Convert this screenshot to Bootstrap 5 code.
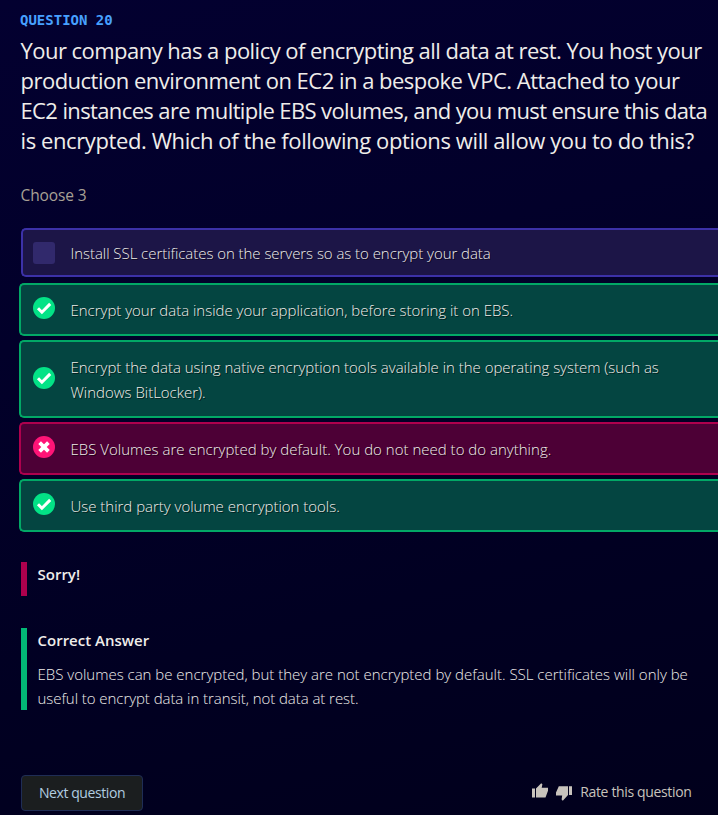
<!DOCTYPE html>
<html lang="en">
<head>
<meta charset="utf-8">
<meta name="viewport" content="width=device-width, initial-scale=1">
<title>Question 20</title>
<link href="https://cdn.jsdelivr.net/npm/bootstrap@5.3.0/dist/css/bootstrap.min.css" rel="stylesheet">
<style>
body{background:linear-gradient(165deg,#030030 0%,#02002a 35%,#010022 70%,#01001c 100%);min-height:815px;color:#efedea;font-family:"Open Sans","Noto Sans",sans-serif;overflow:hidden}
.quiz{padding:11px 0 0 21px}
.q-label{font:bold 14px/18px "DejaVu Sans Mono",monospace;color:#47a0ff;margin:0 0 6px -1px}
.q-title{font-size:22px;line-height:30px;font-weight:400;letter-spacing:-.51px;margin-left:-.5px}
.l1{letter-spacing:-.535px}.l3{letter-spacing:-.625px}.l4{letter-spacing:-.4px}
.line{white-space:nowrap;display:block;width:max-content}
.hint{font-size:15.5px;line-height:24px;color:#a8a095;margin:28px 0 21px -.5px;letter-spacing:-.1px}
.option{border:2px solid;border-radius:5px;font-size:15px;line-height:25px;font-weight:340;padding-left:10px;border-right:0;border-top-right-radius:0;border-bottom-right-radius:0;text-shadow:1px 1px 0 rgba(0,0,0,.6)}
.option .line{letter-spacing:-.02px;position:relative;top:.5px}
.option .o1{letter-spacing:-.05px}.option .o5{letter-spacing:.01px}
.plain{height:49px;background:#1c1547;border-color:#3c31a8;margin-bottom:6px}
.good,.bad{margin-left:-2px;padding-left:12px;height:53px;margin-bottom:4px}
.good{background:#044541;border-color:#02a866}
.tall{height:78px}
.bad{background:#4d0036;border-color:#ae004d}
.icon{width:22px;height:22px;margin-right:15.5px;flex:none}
.good .icon,.bad .icon{margin-top:-4px}
.tall .icon{margin-top:-2px}
.box{background:#31296c;border-radius:3px}
.note{border-left:6px solid;padding-left:10.500px;font-size:15px;line-height:24px}
.sorry{border-color:#ae004d;height:34px;margin-top:30px}
.answer{border-color:#02b876;height:82px;margin-top:32px}
.note strong{font-weight:640;font-size:15px;display:block}
.note p{font-weight:340;margin:10px 0 0;letter-spacing:-.005px}
.a2{letter-spacing:-.06px}
.actions{margin-top:65px;padding-right:26.500px}
.next{width:122px;height:36px;background:#1b1e1f;border:1px solid #1f2d55;border-radius:4px;color:#b1cde0;font-size:14px;line-height:20px;padding:0;letter-spacing:-.42px}
.rate{font-size:14px;color:#c8c3bc;margin-bottom:3px;letter-spacing:-.35px}
</style>
</head>
<body>
<main class="quiz">
<div class="q-label">QUESTION 20</div>
<h1 class="q-title mb-0">
<span class="line l1">Your company has a policy of encrypting all data at rest. You host your</span>
<span class="line l2">production environment on EC2 in a bespoke VPC. Attached to your</span>
<span class="line l3">EC2 instances are multiple EBS volumes, and you must ensure this data</span>
<span class="line l4">is encrypted. Which of the following options will allow you to do this?</span>
</h1>
<div class="hint"><span class="line">Choose 3</span></div>
<div class="option plain d-flex align-items-center"><span class="icon box"></span><span class="line o1">Install SSL certificates on the servers so as to encrypt your data</span></div>
<div class="option good d-flex align-items-center"><svg class="icon" viewBox="0 0 22 22"><circle cx="11" cy="11" r="11" fill="#03e286"/><path d="M5 11.300l3.900 3.900L17.200 6.900" fill="none" stroke="#fff" stroke-width="3"/></svg><span class="line o2">Encrypt your data inside your application, before storing it on EBS.</span></div>
<div class="option good tall d-flex align-items-center"><svg class="icon" viewBox="0 0 22 22"><circle cx="11" cy="11" r="11" fill="#03e286"/><path d="M5 11.300l3.900 3.900L17.200 6.900" fill="none" stroke="#fff" stroke-width="3"/></svg><span><span class="line o3">Encrypt the data using native encryption tools available in the operating system (such as</span><span class="line o4">Windows BitLocker).</span></span></div>
<div class="option bad d-flex align-items-center"><svg class="icon" viewBox="0 0 22 22"><circle cx="11" cy="11" r="11" fill="#ff1477"/><path d="M6.600 6.600l8.800 8.800M15.400 6.600l-8.800 8.800" fill="none" stroke="#fff" stroke-width="3.800"/></svg><span class="line o5">EBS Volumes are encrypted by default. You do not need to do anything.</span></div>
<div class="option good d-flex align-items-center mb-0"><svg class="icon" viewBox="0 0 22 22"><circle cx="11" cy="11" r="11" fill="#03e286"/><path d="M5 11.300l3.900 3.900L17.200 6.900" fill="none" stroke="#fff" stroke-width="3"/></svg><span class="line o6">Use third party volume encryption tools.</span></div>
<div class="note sorry"><strong class="line">Sorry!</strong></div>
<div class="note answer"><strong class="line">Correct Answer</strong><p><span class="line a1">EBS volumes can be encrypted, but they are not encrypted by default. SSL certificates will only be</span><span class="line a2">useful to encrypt data in transit, not data at rest.</span></p></div>
<div class="actions d-flex justify-content-between align-items-center">
<button class="btn next" type="button">Next question</button>
<div class="rate d-flex align-items-center">
<svg width="16" height="20" viewBox="0 0 16 20" fill="#c8c3bc"><path d="M0 6.500h3v9H0zM4 6.500L9.200 1.200l1.200 1L9.700 5.700H16v3L13.500 15.500H4z"/></svg>
<svg width="16" height="20" viewBox="0 0 16 20" class="ms-2 me-2" fill="#c8c3bc"><path d="M16 4.300h-3v8.700h3zM12 4.300H2.800L0 10.500v3h6.200L5.600 17.500l1.200 1.200 5.200-5.600z"/></svg>
<span class="line r1">Rate this question</span></div>
</div>
</main>
<script src="https://cdn.jsdelivr.net/npm/bootstrap@5.3.0/dist/js/bootstrap.bundle.min.js"></script>
</body>
</html>
